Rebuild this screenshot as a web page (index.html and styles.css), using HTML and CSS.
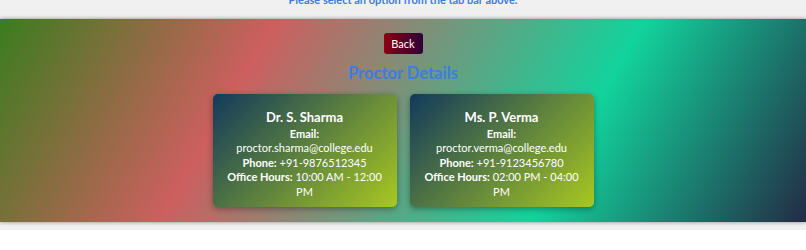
FILE: index.html
```html
<!DOCTYPE html>
<html>
<head>
<meta charset="utf-8">
<link rel="stylesheet" href="styles.css">
</head>
<body>
<div class="topbar">
  <p class="hint">Please select an option from the tab bar above.</p>
</div>
<section class="panel">
  <button class="back">Back</button>
  <h2 class="title">Proctor Details</h2>
  <div class="cards">
    <div class="card">
      <h3 class="name">Dr. S. Sharma</h3>
      <p class="line"><b>Email:</b> proctor.sharma@college.edu</p>
      <p class="line"><b>Phone:</b> +91-9876512345</p>
      <p class="line"><b>Office Hours:</b> 10:00 AM - 12:00 PM</p>
    </div>
    <div class="card">
      <h3 class="name">Ms. P. Verma</h3>
      <p class="line"><b>Email:</b> proctor.verma@college.edu</p>
      <p class="line"><b>Phone:</b> +91-9123456780</p>
      <p class="line"><b>Office Hours:</b> 02:00 PM - 04:00 PM</p>
    </div>
  </div>
</section>
<div class="below"></div>
</body>
</html>
```
FILE: styles.css
```css
html, body {
  margin: 0;
  padding: 0;
}
body {
  background: #f0f0f0;
  font-family: Lato, "Open Sans", sans-serif;
  height: 250px;
  overflow: hidden;
}
.topbar {
  height: 19px;
  overflow: hidden;
  text-align: center;
}
.hint {
  margin: -8px 0 0;
  font-size: 11px;
  line-height: 16px;
  font-weight: 700;
  color: #3b7de0;
}
.panel {
  background: linear-gradient(120deg, #3a7d1e 0%, #cd5f5f 30%, #12d39c 70%, #232b45 100%);
  box-shadow: 0 0 4px rgba(0, 0, 0, 0.45);
  height: 203px;
  box-sizing: border-box;
  padding-top: 14px;
  display: flex;
  flex-direction: column;
  align-items: center;
  position: relative;
  z-index: 1;
}
.back {
  width: 39px;
  height: 21px;
  border: none;
  border-radius: 3px;
  padding: 0;
  background: linear-gradient(90deg, #8c0012, #2e0038);
  color: #fff;
  font-family: inherit;
  font-size: 11px;
}
.title {
  margin: 8px 0 0;
  font-size: 16.5px;
  line-height: 22px;
  font-weight: 700;
  color: #3b7de0;
}
.cards {
  display: flex;
  gap: 13px;
  margin-top: 10px;
}
.card {
  width: 184px;
  height: 113px;
  box-sizing: border-box;
  padding: 15px 12px 0;
  border-radius: 5px;
  background: linear-gradient(135deg, #123a5c 0%, #a8c820 100%);
  box-shadow: 0 2px 6px rgba(0, 0, 0, 0.35);
  color: #fff;
  text-align: center;
}
.name {
  margin: 0 0 1px;
  font-size: 13px;
  line-height: 17px;
  font-weight: 700;
}
.line {
  margin: 0;
  font-size: 11px;
  line-height: 14.4px;
  font-weight: 400;
}
.line b {
  font-weight: 700;
}
.below {
  margin-top: 8px;
  background: #fff;
  height: 40px;
}
```
